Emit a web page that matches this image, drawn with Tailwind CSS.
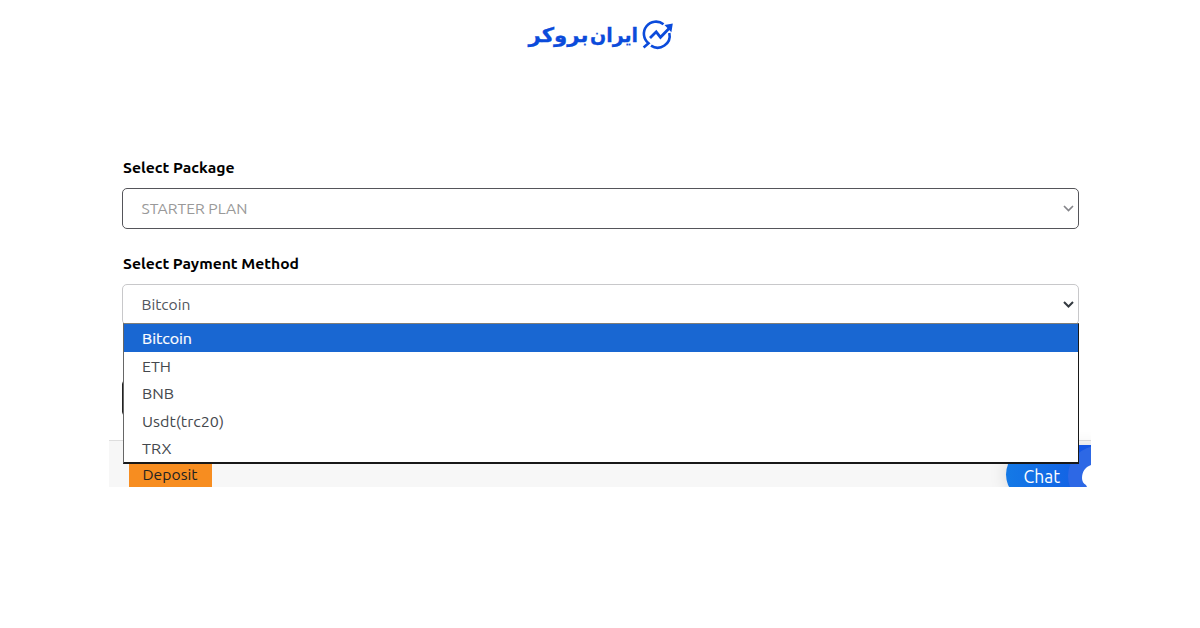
<!DOCTYPE html>
<html lang="en">
<head>
<meta charset="utf-8">
<title>Deposit</title>
<script src="https://cdn.jsdelivr.net/npm/@tailwindcss/browser@4"></script>
</head>
<body class="h-[628px] overflow-hidden bg-white font-['Ubuntu','Noto_Sans',sans-serif] text-[15.4px]">
<header class="flex h-[70px] justify-center pt-[18px]">
  <svg class="h-[36px] w-[148px]" viewBox="526 18 148 36" fill="none" stroke="#0b4bdb">
    <g font-family="DejaVu Sans, sans-serif" font-weight="700" font-size="20" fill="#0b4bdb" stroke-width=".3" direction="rtl">
      <text x="638" y="41.5" textLength="48" lengthAdjust="spacingAndGlyphs">ایران</text>
      <text x="588.5" y="41.5" textLength="60" lengthAdjust="spacingAndGlyphs">بروکر</text>
    </g>
    <path d="M663.5 24.2A12 12 0 0 0 648.5 43.2L643.6 47.4M651 45.7A12 12 0 0 0 669.3 33" stroke-width="2.6"/>
    <path d="M650 38L656.2 31.8L660.5 37.3L669 28.5" stroke-width="2.8"/>
    <path d="M664.5 25L672.8 23.6L671.4 32.3Z" fill="#0b4bdb" stroke="none"/>
  </svg>
</header>
<main class="relative mx-auto flex h-[417px] w-[982px] flex-col overflow-hidden">
  <form class="flex h-[370px] shrink-0 flex-col pl-[13px] pr-[12px] pt-[86px]">
    <div class="flex h-8 items-start font-bold leading-6 text-black"><svg class="h-6 w-[200px] overflow-visible" fill="black"><text x="1" y="17.4" textLength="111.5" lengthAdjust="spacingAndGlyphs">Select Package</text></svg></div>
    <div class="flex h-[40.5px] shrink-0 items-center justify-between rounded-[5px] border border-[#55555a] pl-[18px] pr-1 text-[#999]">
      <svg class="h-6 w-[200px]" fill="currentColor"><text x=".5" y="18" textLength="106" lengthAdjust="spacingAndGlyphs">STARTER PLAN</text></svg>
      <svg class="size-[11px]" viewBox="0 0 11 11" fill="none" stroke="#85858a" stroke-width="1.7"><path d="M1 3L5.5 7.5L10 3"/></svg>
    </div>
    <div class="mt-[23.5px] flex h-8 items-start font-bold leading-6 text-black"><svg class="h-6 w-[200px] overflow-visible" fill="black"><text x="1" y="16.8" textLength="176" lengthAdjust="spacingAndGlyphs">Select Payment Method</text></svg></div>
    <div class="flex h-[41px] shrink-0 items-center justify-between rounded-[5px] border border-[#c8c8ca] pl-[18px] pr-1 text-[#51565d]">
      <svg class="h-6 w-[200px]" fill="currentColor"><text x=".5" y="16.6" textLength="49" lengthAdjust="spacingAndGlyphs">Bitcoin</text></svg>
      <svg class="size-[11px]" viewBox="0 0 11 11" fill="none" stroke="#343a40" stroke-width="2"><path d="M1 3L5.5 7.5L10 3"/></svg>
    </div>
    <div class="mt-[55px] h-[36px] shrink-0 rounded-[4px] border border-[#222]"></div>
  </form>
  <footer class="flex h-[47px] shrink-0 justify-between border-t border-[#dedede] bg-[#f7f7f7] pl-5">
    <div class="mt-3 w-[83px] bg-[#f78d20] pl-[13px] pt-[8px] text-[#222]"><svg class="h-6 w-[60px] overflow-visible" fill="currentColor"><text x=".5" y="18.5" textLength="55" lengthAdjust="spacingAndGlyphs">Deposit</text></svg></div>
  </footer>
  <div class="absolute left-[897px] top-[378px] h-[53px] w-[100px] rounded-l-[28px] bg-linear-to-r from-[#1479e6] to-[#1557e4] pl-[17px] pt-[15px] text-white shadow-[0_0_18px_rgba(0,0,0,0.13)]">
    <svg class="h-8 w-[48px] overflow-visible" fill="white"><text x=".5" y="20" font-size="18" textLength="36.5" lengthAdjust="spacingAndGlyphs">Chat</text></svg>
  </div>
  <svg class="absolute right-0 top-[375px] h-[42px] w-[25px]" viewBox="0 0 25 42"><path d="M12 0H25V42H12Z" fill="#1557e4"/><circle cx="32" cy="31" r="30" fill="#2d68e5"/><path d="M25 20C19 22 16 27 16 33Q16 38 20 40L21 42H25Z" fill="white"/></svg>
  <ul class="absolute left-[14px] top-[253px] h-[141px] w-[956px] border-b-2 border-l border-r border-t border-b-[#181818] border-l-[#666] border-r-[#181818] border-t-[#807e78] bg-white text-[#44484d]">
    <li class="h-7 bg-[#1967d2] pl-[17px] text-white"><svg class="h-7 w-[200px]" fill="currentColor"><text x="1" y="20" textLength="50" lengthAdjust="spacingAndGlyphs" stroke="currentColor" stroke-width=".2">Bitcoin</text></svg></li>
    <li class="h-[27.4px] pl-[17px]"><svg class="h-7 w-[200px]" fill="currentColor"><text x="1" y="19.5" textLength="29" lengthAdjust="spacingAndGlyphs">ETH</text></svg></li>
    <li class="h-[27.4px] pl-[17px]"><svg class="h-7 w-[200px]" fill="currentColor"><text x="1" y="19.5" textLength="32" lengthAdjust="spacingAndGlyphs">BNB</text></svg></li>
    <li class="h-[27.4px] pl-[17px]"><svg class="h-7 w-[200px]" fill="currentColor"><text x="1" y="19.5" textLength="82" lengthAdjust="spacingAndGlyphs">Usdt(trc20)</text></svg></li>
    <li class="h-[27.4px] pl-[17px]"><svg class="h-7 w-[200px]" fill="currentColor"><text x="1" y="19.7" textLength="29.5" lengthAdjust="spacingAndGlyphs">TRX</text></svg></li>
  </ul>
</main>
</body>
</html>
